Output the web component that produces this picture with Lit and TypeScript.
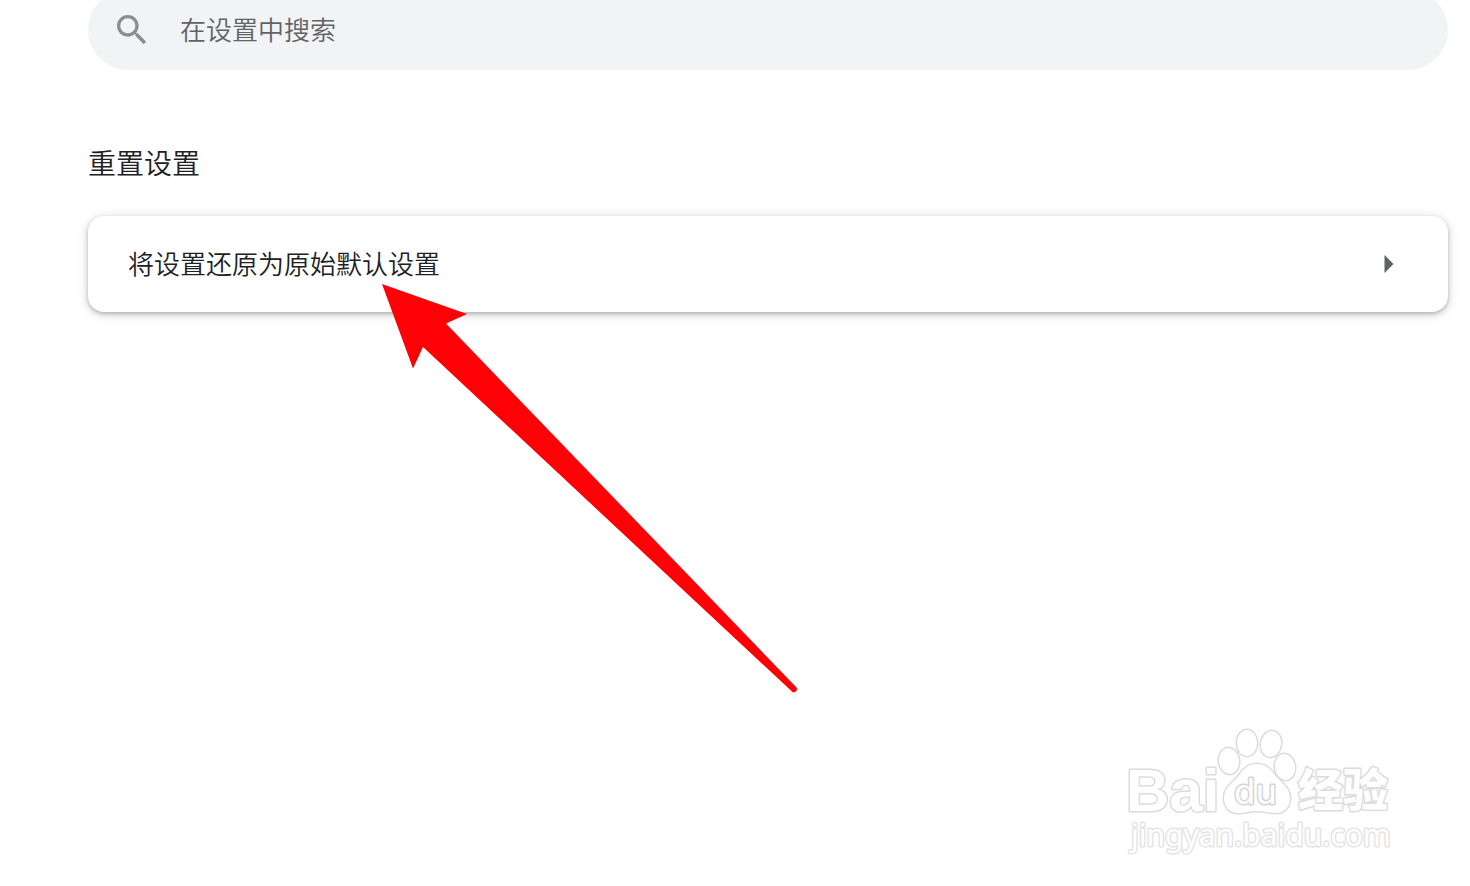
import { LitElement, html, css } from "lit";
import { customElement } from "lit/decorators.js";

@customElement("settings-search")
export class SettingsSearch extends LitElement {
  static styles = css`
    :host {
      display: block;
    }
    .bar {
      display: flex;
      align-items: center;
      gap: 28px;
      box-sizing: border-box;
      height: 80px;
      padding: 0 24px;
      border-radius: 40px;
      background: #f1f3f4;
    }
    .icon {
      flex: none;
      width: 40px;
      height: 40px;
      fill: #8b8e91;
    }
    .field {
      flex: 1;
      min-width: 0;
      height: 44px;
      padding: 0 0 4px;
      box-sizing: border-box;
      border: 0;
      outline: 0;
      background: transparent;
      color: #202124;
      font: inherit;
      font-size: 26px;
      line-height: 38px;
    }
    .field::placeholder {
      color: #5f6368;
      opacity: 1;
    }
  `;

  render() {
    return html`
      <label class="bar">
        <svg class="icon" viewBox="0 0 24 24" aria-hidden="true">
          <path
            d="M15.5 14h-.79l-.28-.27C15.41 12.59 16 11.11 16 9.5 16 5.91 13.09 3 9.5 3S3 5.91 3 9.5 5.91 16 9.5 16c1.61 0 3.09-.59 4.23-1.57l.27.28v.79l5 4.99L20.49 19l-4.99-5zm-6 0C7.01 14 5 11.99 5 9.5S7.01 5 9.5 5 14 7.01 14 9.5 11.99 14 9.5 14z"
          />
        </svg>
        <input class="field" type="text" aria-label="在设置中搜索" placeholder="在设置中搜索" />
      </label>
    `;
  }
}

@customElement("settings-row")
export class SettingsRow extends LitElement {
  static styles = css`
    :host {
      display: block;
    }
    .row {
      display: flex;
      align-items: center;
      justify-content: space-between;
      box-sizing: border-box;
      width: 100%;
      min-height: 96px;
      padding: 0 40px;
      border: 0;
      border-radius: 16px;
      background: #fff;
      box-shadow: 0 2px 4px rgba(60, 64, 67, 0.3), 0 2px 12px rgba(60, 64, 67, 0.2);
      color: #202124;
      font: inherit;
      font-size: 26px;
      line-height: 38px;
      text-align: left;
      cursor: pointer;
    }
    .label {
      padding-bottom: 2px;
    }
    .caret {
      flex: none;
      width: 40px;
      height: 40px;
      fill: #5f6368;
    }
  `;

  render() {
    return html`
      <button class="row" type="button">
        <span class="label"><slot></slot></span>
        <svg class="caret" viewBox="0 0 40 40" aria-hidden="true">
          <path d="M16.500 11v18l9-9z" />
        </svg>
      </button>
    `;
  }
}

@customElement("site-mark")
export class SiteMark extends LitElement {
  static styles = css`
    :host {
      display: block;
    }
    .mark {
      display: block;
      width: 280px;
      height: 140px;
      fill: #fff;
      stroke: #dcdcdc;
      stroke-width: 3px;
      stroke-linejoin: round;
      paint-order: stroke;
    }
    .latin {
      font: bold 60px "Liberation Sans", sans-serif;
    }
    .paw-text {
      font: 34px "DejaVu Sans", sans-serif;
      stroke: #d4d4d4;
    }
    .han {
      font: 900 45px "Noto Sans CJK SC", sans-serif;
    }
    .address {
      font: 30px "Noto Sans", sans-serif;
      stroke: #e4e4e4;
    }
  `;

  render() {
    return html`
      <svg class="mark" viewBox="1120 720 280 140" role="img" aria-label="Baidu 经验">
        <text class="latin" x="1126" y="811">Bai</text>
        <ellipse cx="1229" cy="761" rx="10" ry="13" transform="rotate(-8 1229 761)" />
        <ellipse cx="1247" cy="743" rx="10" ry="13" />
        <ellipse cx="1271" cy="744" rx="10" ry="13" transform="rotate(10 1271 744)" />
        <ellipse cx="1285" cy="767" rx="10" ry="13" transform="rotate(-8 1285 767)" />
        <path
          d="M1257 764c-8 0-13 4-17 10-6 8-16 13-16 24 0 9 6 15 14 15s11-2 19-2 12 2 19 2c8 0 14-6 14-15 0-11-10-16-16-24-4-6-9-10-17-10z"
        />
        <text class="paw-text" x="1234" y="804">du</text>
        <text class="han" x="1298" y="807">经验</text>
        <text class="address" x="1131" y="846">jingyan.baidu.com</text>
      </svg>
    `;
  }
}

@customElement("app-root")
export class AppRoot extends LitElement {
  static styles = css`
    :host {
      display: block;
      position: relative;
      min-height: 100vh;
      overflow: hidden;
      background: #fff;
      color: #202124;
      font-family: "Noto Sans CJK SC", sans-serif;
      font-weight: 350;
    }
    .page {
      display: flex;
      flex-direction: column;
      margin-top: -10px;
      padding: 0 22px 40px 88px;
    }
    .title {
      margin: 72px 0 34px;
      font-size: 28px;
      font-weight: 350;
      line-height: 40px;
    }
    .pointer {
      position: absolute;
      top: 280px;
      left: 378px;
      width: 424px;
      height: 416px;
      fill: #ff0006;
      pointer-events: none;
    }
    .corner {
      position: absolute;
      right: 70px;
      bottom: 26px;
      pointer-events: none;
    }
  `;

  render() {
    return html`
      <main class="page">
        <settings-search></settings-search>
        <h2 class="title">重置设置</h2>
        <settings-row>将设置还原为原始默认设置</settings-row>
      </main>
      <svg class="pointer" viewBox="378 280 424 416" aria-hidden="true">
        <path
          d="M382 284L467 314L446 323.5L796.500 687.500C798 690 795.500 693.500 792.500 692L423 347L413 368.500z"
        />
      </svg>
      <site-mark class="corner"></site-mark>
    `;
  }
}
